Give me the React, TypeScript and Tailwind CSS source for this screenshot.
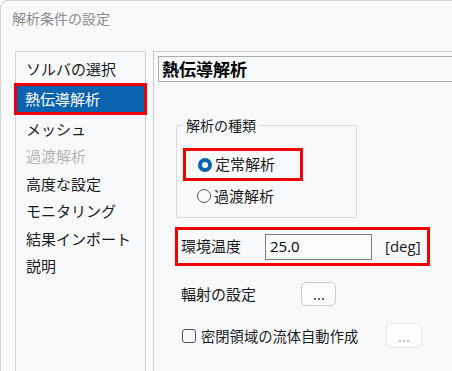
const FONT = { fontFamily: '"Noto Sans CJK JP", "Noto Sans", sans-serif' }

const items = [
    { label: "ソルバの選択", state: "normal" },
    { label: "熱伝導解析", state: "selected" },
    { label: "メッシュ", state: "normal" },
    { label: "過渡解析", state: "disabled" },
    { label: "高度な設定", state: "normal" },
    { label: "モニタリング", state: "normal" },
    { label: "結果インポート", state: "normal" },
    { label: "説明", state: "normal" },
]

const DotsButton = ({ disabled }: { disabled?: boolean }) => (
    <div
        className={`flex shrink-0 items-end justify-center rounded-[5px] border bg-[#fdfdfd] pb-[5px] ${disabled ? "h-[25px] w-[36px] border-[#e6e7ea]" : "h-[24px] w-[35px] border-[#c9cacd]"}`}
    >
        <div className="flex gap-[2px]">
            {[0, 1, 2].map(i => (
                <span key={i} className={`block h-[2px] w-[2px] rounded-full ${disabled ? "bg-[#a8a8a8]" : "bg-[#333]"}`} />
            ))}
        </div>
    </div>
)

export default function App() {
    return (
        <div className="h-[371px] w-[452px] overflow-hidden bg-white" style={FONT}>
            <div className="h-[420px] w-[500px] rounded-tl-[8px] border-l border-t border-[#d3d4d7] bg-[#f8f9fb]">
                <div className="flex h-[35px] items-center pl-[11px] text-[14px] text-[#8b8b8b]">解析条件の設定</div>

                <div className="mt-[15px] flex h-[400px]">
                    {/* left list */}
                    <div className="ml-[14px] w-[131px] shrink-0 border border-[#d2d4d8] bg-[#f8f9fb] pt-[3px]">
                        {items.map((item, idx) => {
                            if (item.state === "selected") {
                                return (
                                    <div key={item.label} className="relative h-[32px] py-[3px] pl-[1px] pr-[1px]">
                                        <div className="flex h-full items-center bg-[#0a63ae] pl-[8px] text-[15px] text-white">{item.label}</div>
                                        <div className="absolute -left-[2px] -right-[2px] top-0 bottom-0 border-[3px] border-[#f00000]" />
                                    </div>
                                )
                            }
                            return (
                                <div
                                    key={item.label}
                                    className={`flex items-center pl-[10px] text-[15px] ${idx === 0 ? "h-[28px]" : "h-[27.5px]"} ${item.state === "disabled" ? "text-[#b4b4b4]" : "text-[#1b1b1b]"}`}
                                >
                                    {item.label}
                                </div>
                            )
                        })}
                    </div>

                    {/* right panel */}
                    <div className="ml-[7px] w-[330px] shrink-0 border border-[#c9cbcf] pl-[4px] pt-[4px]">
                        <div className="flex h-[26px] items-center border border-[#a9abaf] pl-[3px] text-[17px] font-bold text-black">熱伝導解析</div>

                        {/* group box */}
                        <div className="relative ml-[18px] mt-[43px] w-[181px] rounded-[2px] border border-[#d9dadd] pb-[6px] pl-[6px] pt-[22px]">
                            <div className="absolute -top-[10px] left-[6px] bg-[#f8f9fb] px-[3px] text-[14px] leading-[18px] text-[#1b1b1b]">解析の種類</div>
                            <div className="flex h-[33px] w-[120px] items-center border-[3px] border-[#f00000] pl-[12px]">
                                <span className="flex h-[14px] w-[14px] items-center justify-center rounded-full bg-[#0a63ae]">
                                    <span className="block h-[6px] w-[6px] rounded-full bg-white" />
                                </span>
                                <span className="ml-[3px] text-[15px] text-[#1b1b1b]">定常解析</span>
                            </div>
                            <div className="flex h-[30px] items-center pl-[14px]">
                                <span className="block h-[14px] w-[14px] rounded-full border border-[#555]" />
                                <span className="ml-[3px] text-[15px] text-[#1b1b1b]">過渡解析</span>
                            </div>
                        </div>

                        {/* ambient temperature */}
                        <div className="ml-[17px] mt-[9px] flex h-[39px] w-[255px] items-center border-[3px] border-[#f00000] pl-[3px]">
                            <span className="w-[84px] shrink-0 text-[15px] text-[#1b1b1b]">環境温度</span>
                            <div className="flex h-[26px] w-[107px] shrink-0 items-center border border-[#7d7f83] bg-[#fbfbfc] pl-[4px] text-[15px] text-black" style={{ fontFamily: '"Open Sans", "Noto Sans CJK JP", sans-serif' }}>25.0</div>
                            <span className="ml-[13px] text-[15px] text-[#1b1b1b]" style={{ fontFamily: '"Open Sans", "Noto Sans CJK JP", sans-serif' }}>[deg]</span>
                        </div>

                        {/* radiation */}
                        <div className="ml-[23px] mt-[16px] flex items-center">
                            <span className="w-[120px] shrink-0 text-[15px] text-[#1b1b1b]">輻射の設定</span>
                            <DotsButton />
                        </div>

                        {/* closed region */}
                        <div className="ml-[24px] mt-[17px] flex items-center">
                            <span className="block h-[14px] w-[14px] shrink-0 rounded-[3px] border border-[#555]" />
                            <span className="ml-[5px] w-[185px] shrink-0 text-[14.3px] text-[#1b1b1b]">密閉領域の流体自動作成</span>
                            <DotsButton disabled />
                        </div>
                    </div>
                </div>
            </div>
        </div>
    )
}
